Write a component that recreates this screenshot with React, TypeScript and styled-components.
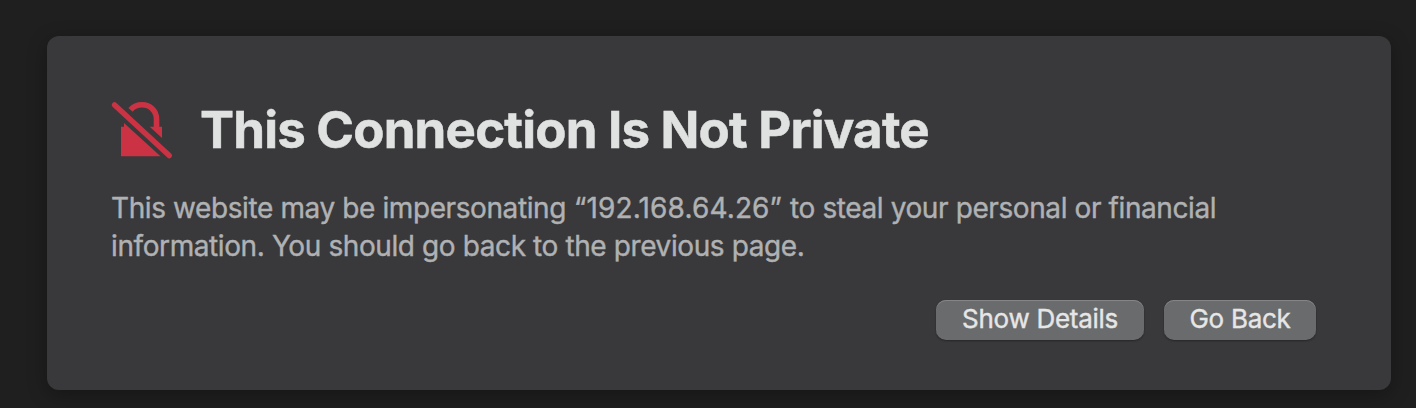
import React from 'react';
import styled, { createGlobalStyle } from 'styled-components';

const Global = createGlobalStyle`
  * { box-sizing: border-box; }
  body { margin: 0; background: #1f1f1f; font-family: Inter, "Liberation Sans", sans-serif; }
`;
const Page = styled.main`
  height: 408px;
  padding: 36px 25px 18px 47px;
  overflow: hidden;
`;
const Card = styled.section`
  height: 354px;
  padding: 64px 75px 50px 64px;
  border-radius: 12px;
  background: #39393b;
  box-shadow: 0 5px 20px rgba(0, 0, 0, 0.3);
`;
const Header = styled.header`
  display: flex;
  align-items: center;
  height: 60px;
  gap: 27px;
`;
const LockIcon = styled.svg`
  display: block;
  flex: none;
  width: 62px;
  height: 60px;
`;
const Title = styled.h1`
  margin: 0;
  color: #e0e2e1;
  font-size: 51px;
  line-height: 60px;
  font-weight: 700;
  letter-spacing: -0.8px;
  -webkit-text-stroke: 0.5px currentColor;
  white-space: nowrap;
`;
const Message = styled.p`
  margin: 29px 0 0;
  color: #b0b1b3;
  font-size: 28px;
  line-height: 38px;
  -webkit-text-stroke: 0.4px currentColor;
  white-space: nowrap;
`;
const Line = styled.span`
  display: block;
  letter-spacing: -0.4px;
`;
const Address = styled.span`
  letter-spacing: 0.14px;
`;
const Actions = styled.div`
  display: flex;
  justify-content: flex-end;
  gap: 20px;
  margin-top: 35px;
`;
const Button = styled.button<{ $width: number }>`
  width: ${({ $width }) => $width}px;
  height: 40px;
  padding: 0 0 2px;
  border: 0;
  border-radius: 10px;
  background: #6a6b6c;
  box-shadow: inset 0 1px 0 #858587, 0 1px 2px rgba(0, 0, 0, 0.35);
  color: #e6e6e6;
  font: 400 26px/38px Inter, sans-serif;
  letter-spacing: -0.28px;
  -webkit-text-stroke: 0.4px currentColor;
  white-space: nowrap;
`;

export default function App() {
  return (
    <Page>
      <Global />
      <Card>
        <Header>
          <LockIcon viewBox="0 0 62 60" aria-hidden="true">
            <path d="M10 26.7H13V23L49.5 56.2H10Z" fill="#cb3243" />
            <path d="M38.7 26.7H51V38Z" fill="#cb3243" />
            <path
              d="M19.5 9.8C22.5 6.5 26.5 4.8 31 4.8C39.5 4.8 45.5 11 45.5 19V29"
              fill="none"
              stroke="#cb3243"
              strokeWidth="5.6"
            />
            <path d="M3.6 4.9L58.2 55.6" stroke="#cb3243" strokeWidth="5.4" strokeLinecap="round" />
          </LockIcon>
          <Title>This Connection Is Not Private</Title>
        </Header>
        <Message>
          <Line>
            This website may be impersonating<Address> “192.168.64.26” </Address>to steal your personal or financial
          </Line>
          <Line>information. You should go back to the previous page.</Line>
        </Message>
        <Actions>
          <Button $width={208}>Show Details</Button>
          <Button $width={152}>Go Back</Button>
        </Actions>
      </Card>
    </Page>
  );
}
